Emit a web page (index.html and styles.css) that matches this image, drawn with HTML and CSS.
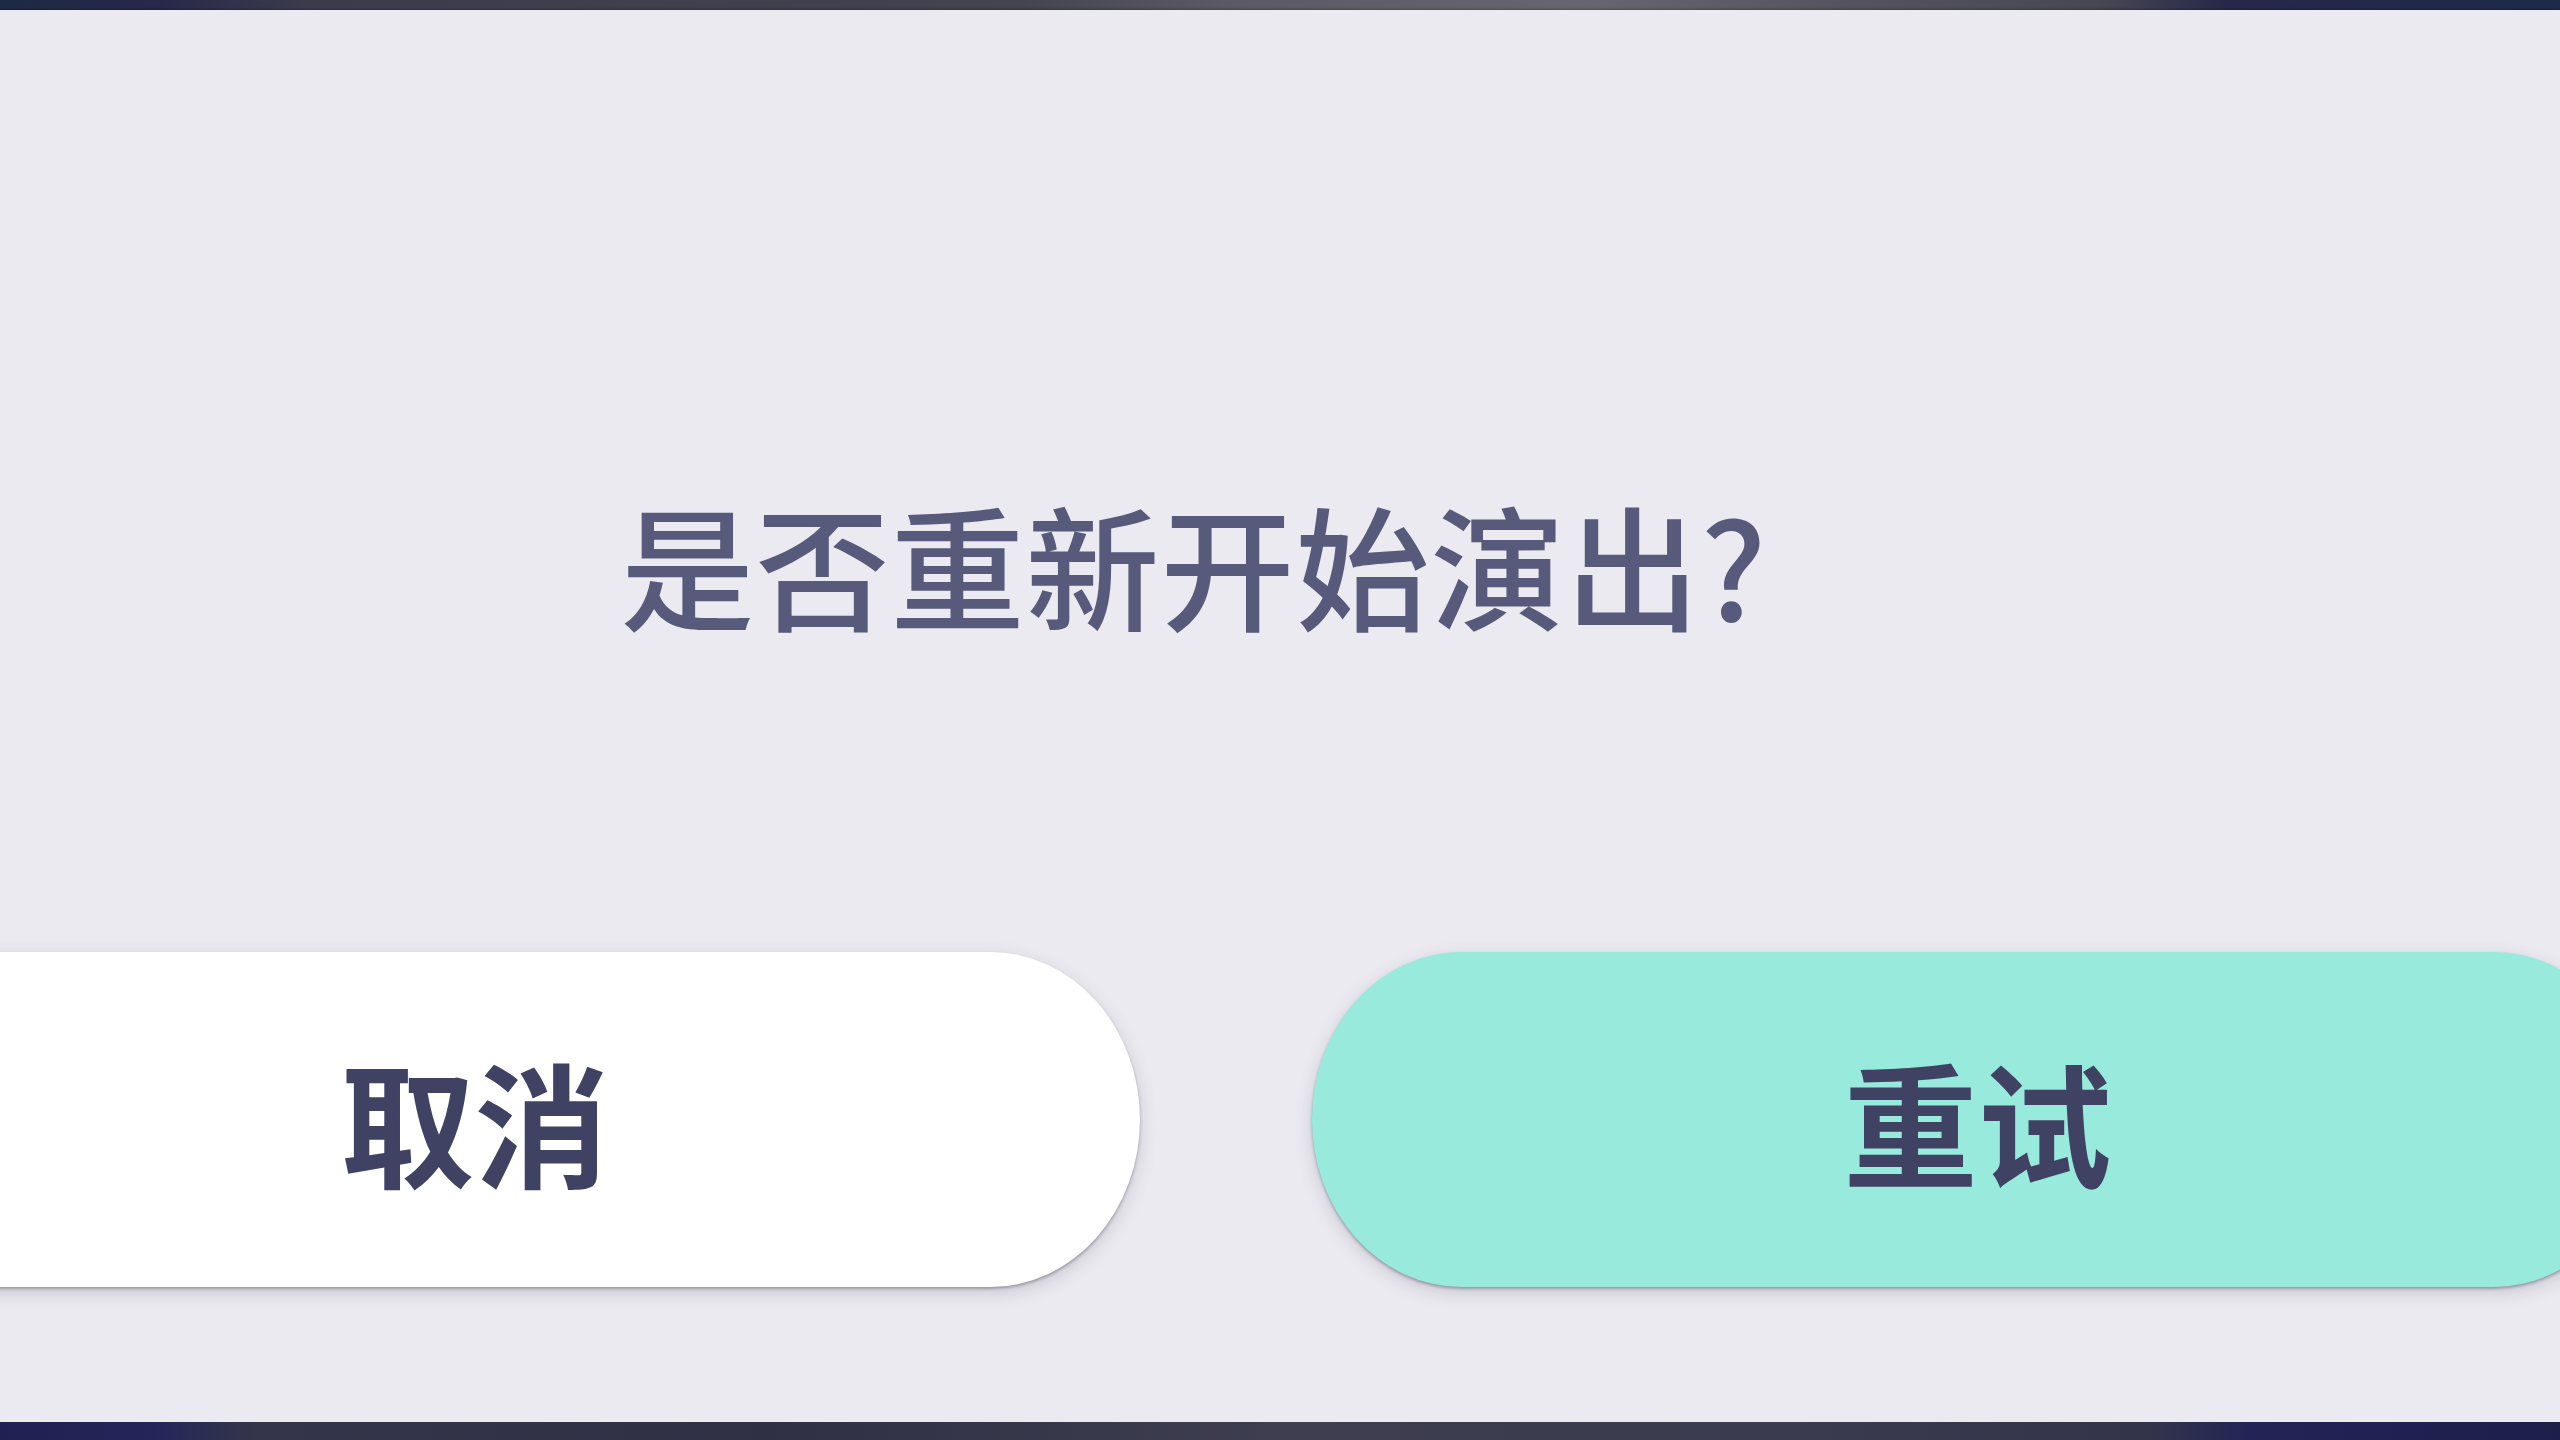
FILE: index.html
```html
<!DOCTYPE html>
<html lang="zh-CN">
<head>
    <meta charset="UTF-8">
    <meta name="viewport" content="width=device-width, initial-scale=1.0">
    <title>重新开始</title>
    <link rel="stylesheet" href="styles.css">
</head>
<body>
<div class="screen">
    <div class="edge edge-top"></div>

    <section class="dialog">
        <p class="dialog-title">是否重新开始演出?</p>
        <div class="dialog-actions">
            <button class="btn btn-cancel">取消</button>
            <button class="btn btn-retry">重试</button>
        </div>
    </section>

    <div class="edge edge-bottom"></div>
</div>
</body>
</html>
```

FILE: styles.css
```css
body {
    margin: 0;
    overflow: hidden;
    font-family: "Noto Sans CJK SC", "Noto Sans", sans-serif;
    background-color: #1f2245;
}

.screen {
    display: flex;
    flex-direction: column;
    width: 2560px;
    height: 1440px;
}

.edge {
    flex: none;
}
.edge-top {
    height: 10px;
    background: linear-gradient(90deg, #1d2a44 0%, #27284a 6%, #3b3b4c 12%, #44444f 40%, #5b5a64 48%, #67666e 62%, #55545e 72%, #474752 82%, #26284a 87%, #1e2a4a 100%);
}
.edge-bottom {
    height: 18px;
    background: linear-gradient(90deg, #1f2150 0%, #24265a 6%, #34354a 10%, #2f3044 30%, #3e3e50 50%, #3a3b4e 70%, #33344a 84%, #222456 88%, #1c1f4a 100%);
}

.dialog {
    flex: 1;
    display: flex;
    flex-direction: column;
    padding-top: 486px;
    background-color: #ebeaf0;
    box-shadow: 0 1px 2px rgba(0, 0, 0, 0.25), 0 -1px 2px rgba(0, 0, 0, 0.25);
}

.dialog-title {
    margin: 0;
    padding-right: 172px;
    font-size: 134px;
    line-height: 1;
    font-weight: 500;
    letter-spacing: 1px;
    color: #575a7b;
    text-align: center;
}

.dialog-actions {
    display: flex;
    gap: 172px;
    margin-top: 322px;
    margin-left: -191px;
}

.btn {
    flex: none;
    width: 1331px;
    height: 335px;
    padding: 0;
    border: none;
    border-radius: 150px / 168px;
    font-family: "Noto Sans CJK SC", "Noto Sans", sans-serif;
    font-size: 134px;
    font-weight: 700;
    line-height: 1;
    color: #404263;
    box-shadow: 0 2px 3px rgba(70, 70, 90, 0.4), 0 6px 18px rgba(70, 70, 90, 0.2);
    cursor: pointer;
}
.btn-cancel {
    background-color: #ffffff;
}
.btn-retry {
    background-color: #97eadc;
}
```
